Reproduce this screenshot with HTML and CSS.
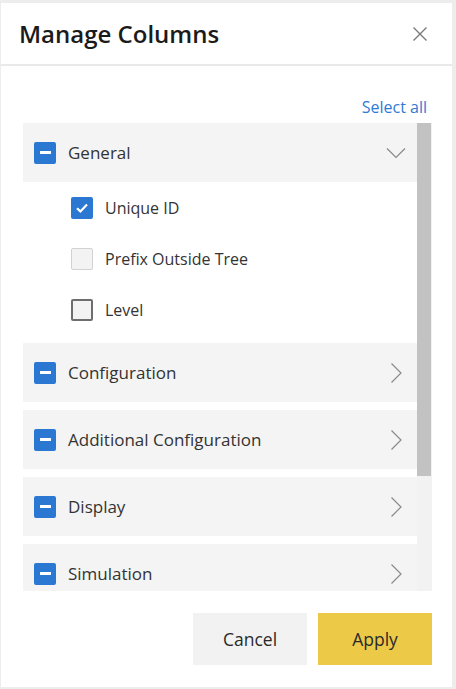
FILE: index.html
```html
<!DOCTYPE html>
<html lang="en">
<head>
<meta charset="utf-8">
<title>Manage Columns</title>
<link rel="stylesheet" href="styles.css">
</head>
<body>
<div class="dialog">
  <div class="header">
    <h1 class="title">Manage Columns</h1>
    <button class="close" aria-label="Close">
      <svg width="16" height="16" viewBox="0 0 16 16"><path d="M1.5 1.5 L14.5 14.5 M14.5 1.5 L1.5 14.5" stroke="#7a7a7a" stroke-width="1.4" fill="none"/></svg>
    </button>
  </div>
  <div class="content">
    <div class="select-row"><a class="select-all">Select all</a></div>
    <div class="list-wrap">
      <div class="list">
        <div class="group">
          <div class="group-head">
            <span class="cb cb-partial"><span class="bar"></span></span>
            <span class="label">General</span>
            <svg class="chev" width="20" height="20" viewBox="0 0 20 20"><path d="M1 5.5 L10 14.5 L19 5.5" stroke="#8a8a8a" stroke-width="1.2" fill="none"/></svg>
          </div>
          <div class="children">
            <div class="child">
              <span class="cb cb-checked"><svg width="16" height="16" viewBox="0 0 16 16"><path d="M3 8.2 L6.4 11.4 L13 4.6" stroke="#fff" stroke-width="2.2" fill="none"/></svg></span>
              <span class="label">Unique ID</span>
            </div>
            <div class="child">
              <span class="cb cb-disabled"></span>
              <span class="label">Prefix Outside Tree</span>
            </div>
            <div class="child">
              <span class="cb cb-empty"></span>
              <span class="label">Level</span>
            </div>
          </div>
        </div>
        <div class="group">
          <div class="group-head">
            <span class="cb cb-partial"><span class="bar"></span></span>
            <span class="label">Configuration</span>
            <svg class="chev" width="20" height="20" viewBox="0 0 20 20"><path d="M5.5 0.5 L15 10 L5.5 19.5" stroke="#8a8a8a" stroke-width="1.2" fill="none"/></svg>
          </div>
        </div>
        <div class="group">
          <div class="group-head">
            <span class="cb cb-partial"><span class="bar"></span></span>
            <span class="label">Additional Configuration</span>
            <svg class="chev" width="20" height="20" viewBox="0 0 20 20"><path d="M5.5 0.5 L15 10 L5.5 19.5" stroke="#8a8a8a" stroke-width="1.2" fill="none"/></svg>
          </div>
        </div>
        <div class="group">
          <div class="group-head">
            <span class="cb cb-partial"><span class="bar"></span></span>
            <span class="label">Display</span>
            <svg class="chev" width="20" height="20" viewBox="0 0 20 20"><path d="M5.5 0.5 L15 10 L5.5 19.5" stroke="#8a8a8a" stroke-width="1.2" fill="none"/></svg>
          </div>
        </div>
        <div class="group">
          <div class="group-head">
            <span class="cb cb-partial"><span class="bar"></span></span>
            <span class="label">Simulation</span>
            <svg class="chev" width="20" height="20" viewBox="0 0 20 20"><path d="M5.5 0.5 L15 10 L5.5 19.5" stroke="#8a8a8a" stroke-width="1.2" fill="none"/></svg>
          </div>
        </div>
      </div>
      <div class="scrollbar"><div class="thumb"></div></div>
    </div>
  </div>
  <div class="footer">
    <button class="btn btn-cancel">Cancel</button>
    <button class="btn btn-apply">Apply</button>
  </div>
</div>
</body>
</html>
```
FILE: styles.css
```css
* { box-sizing: border-box; }
html, body { margin: 0; }
body {
  background: #ededed;
  padding: 3px 4px 2px 1px;
  font-family: "Open Sans", "Noto Sans", sans-serif;
  color: #333;
}
.dialog {
  width: 451px;
  height: 684px;
  background: #fff;
  display: flex;
  flex-direction: column;
}
.header {
  height: 63px;
  border-bottom: 2px solid #e9e9e9;
  display: flex;
  align-items: center;
  justify-content: space-between;
  padding: 0 25px 0 18px;
}
.title {
  margin: 0;
  font-size: 24px;
  font-weight: 600;
  color: #1b1b1b;
  line-height: 32px;
}
.close {
  border: 0;
  background: none;
  padding: 0;
  width: 16px;
  height: 16px;
  display: flex;
  margin-right: -1px;
}
.content {
  padding: 31px 20px 0 22px;
}
.select-row {
  display: flex;
  justify-content: flex-end;
  height: 20px;
  margin-bottom: 6px;
  padding-right: 5px;
}
.select-all {
  font-size: 16px;
  line-height: 20px;
  color: #2f7bd4;
}
.list-wrap {
  display: flex;
  height: 468px;
}
.list {
  flex: 1;
  overflow: hidden;
  display: flex;
  flex-direction: column;
  gap: 8px;
}
.group-head {
  height: 59px;
  flex-shrink: 0;
  background: #f4f4f4;
  display: flex;
  align-items: center;
  padding: 0 11px;
}
.children {
  padding-left: 48px;
}
.child {
  height: 51px;
  display: flex;
  align-items: center;
}
.label {
  font-size: 17px;
  margin-left: 12px;
  color: #333;
  flex: 1;
}
.child .label { font-size: 16px; }
.cb {
  width: 22px;
  height: 22px;
  flex-shrink: 0;
  border-radius: 2px;
  display: flex;
  align-items: center;
  justify-content: center;
}
.cb-partial, .cb-checked { background: #2b78d2; }
.bar {
  width: 11px;
  height: 2.5px;
  background: #fff;
}
.cb-disabled {
  background: #f3f3f3;
  border: 1px solid #d2d2d2;
}
.cb-empty {
  background: #f3f3f3;
  border: 2px solid #6e6e6e;
}
.chev { flex-shrink: 0; }
.scrollbar {
  width: 15px;
  background: #f2f2f2;
  flex-shrink: 0;
}
.thumb {
  width: 14px;
  height: 353px;
  background: #c2c2c2;
}
.footer {
  display: flex;
  justify-content: flex-end;
  gap: 11px;
  padding: 22px 20px 0 0;
}
.btn {
  width: 114px;
  height: 52px;
  border: 0;
  font-family: "Open Sans", "Noto Sans", sans-serif;
  font-size: 17.5px;
  color: #2a2a2a;
}
.btn-cancel { background: #f2f2f2; }
.btn-apply { background: #edc948; }
```
